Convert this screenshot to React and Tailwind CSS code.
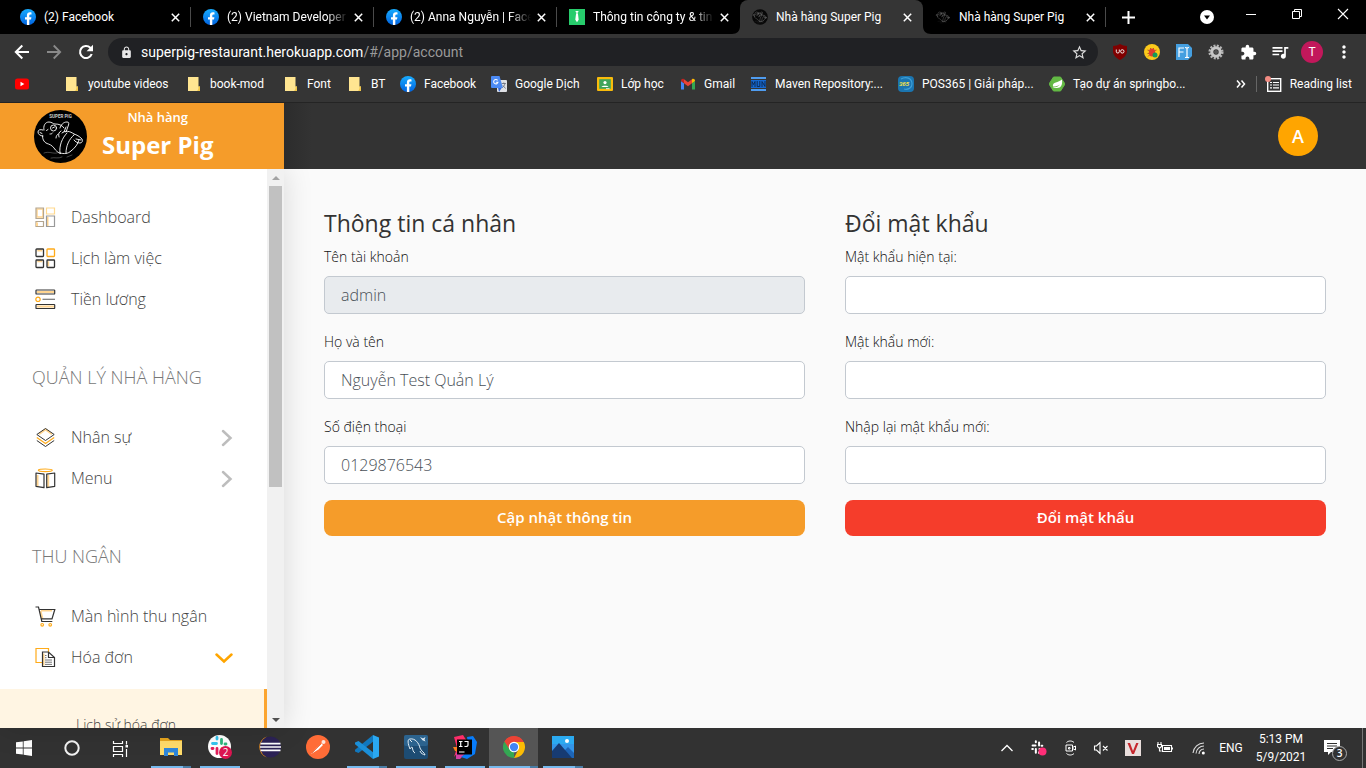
import React from "react";
import { MdExtension, MdQueueMusic, MdStarBorder, MdLock, MdMoreVert } from "react-icons/md";

const Svg = ({ s = 16, v = "0 0 16 16", children, className = "" }) => (
  <svg width={s} height={s} viewBox={v} fill="none" className={"shrink-0 " + className} aria-hidden="true">{children}</svg>
);

/* ---------- brand icons ---------- */
const Facebook = () => (
  <Svg>
    <defs><linearGradient id="fb" x1="0" y1="0" x2="0" y2="1"><stop stopColor="#18acfe" /><stop offset="1" stopColor="#0163e0" /></linearGradient></defs>
    <circle cx="8" cy="8" r="8" fill="url(#fb)" />
    <path d="M6.900 16v-5.400H5V8.200h1.900V6.400c0-2 1.200-3.200 3-3.200.6 0 1.300.1 1.600.2v2h-1c-1 0-1.200.6-1.200 1.300v1.500h2.100l-.4 2.400H9.300V16z" fill="#fff" />
  </Svg>
);
const Tie = () => (
  <Svg><rect width="16" height="16" fill="#27cc6c" /><path d="M6.400 2h3.200l-.7 1.800H7.100zM7.100 4.200h1.800l.8 6.600L8 13.200l-1.700-2.400z" fill="#fff" /></Svg>
);
const PigLines = () => (
  <g stroke="#fff" strokeWidth=".9" fill="none" strokeLinecap="round" strokeLinejoin="round">
    <path d="M10 20c-1-4 1-8 5-8 3 0 4 2 6 2 4 0 7 1 9 4M9 20c-3-1-5 0-5 2s2 4 5 4M8.500 26c0 4 2 7 6 8 3 1 5 3 7 6 2 2 3 3 5 3.500M26 18c1-3 3-6 7-6 2 0 2 1 1.500 3L32 22M30 22l2-5M28 23c3-3 8-2 12 1M25 27c-1-3 0-5 2-6M22 28c0-2 1-3 2-4M26 43c-1-7 2-15 7-20M32 43c0-7 3-14 8-18M37 41c4-3 7-7 8-11M40 24c3 1 5 2 8 5 1 2 0 4-2 4s-5-1-6-3M42 29l5 1M26 43c4 1 8 1 11-2" />
    <circle cx="19.500" cy="18" r="3" /><path d="M18.500 18l2-1M12.500 20.500l1.500-1M16 24c1 0 2 0 2.500-1M6 22.500l2 1" />
    <path d="M10 43c5-2 9 1 13 0M17 48c4-1 7 1 11-1M33 47l5-2" opacity=".3" />
  </g>
);
const PigMark = ({ ring }) => (
  <Svg v="0 0 53 53"><circle cx="26.500" cy="26.500" r="26" fill={ring ? "#080808" : "#000"} /><g opacity=".7" transform="translate(0 -2)"><PigLines /></g></Svg>
);
const Folder = () => (
  <Svg><path d="M2 1h10.500v9.500h1.500V15H2z" fill="#ffe591" /><path d="M12.500 10.500c0 2 0 3-1.500 4.500h3v-4.500z" fill="#f0c64a" /></Svg>
);
const YouTube = () => (
  <Svg><rect x="1" y="2.500" width="14" height="11" rx="2.500" fill="#f00" /><path d="M6.500 5.800v4.400L10.300 8z" fill="#fff" /></Svg>
);
const Translate = () => (
  <Svg>
    <rect x="6" y="4" width="10" height="12" rx="1" fill="#dfe1e5" /><path d="M8 16l3-4.500H7z" fill="#3367d6" />
    <path d="M1 0h7.500l3.500 12H1a1 1 0 01-1-1V1a1 1 0 011-1z" fill="#4c8bf5" />
    <path d="M6.600 4.300a2.200 2.200 0 10.400 1.900H4.800" stroke="#fff" strokeWidth="1.100" />
    <path d="M10.800 7.500h4M12.800 6.500v1M14 7.500c-.5 2-1.500 3-2.500 4M12 9.500l2.500 3" stroke="#6b7280" strokeWidth=".9" />
  </Svg>
);
const Classroom = () => (
  <Svg><rect y="1" width="16" height="14" rx="1" fill="#f9bb0b" /><rect x="2.200" y="3.200" width="11.600" height="9.600" fill="#3fa45b" /><circle cx="8" cy="6.600" r="1.600" fill="#fff" /><path d="M4.500 11c.4-1.800 6.600-1.800 7 0z" fill="#fff" /><path d="M9 13.200h3.500v-1H9z" fill="#eee" /></Svg>
);
const Gmail = () => (
  <Svg><path d="M1 13.500h3V7.200L1 5z" fill="#4285f4" /><path d="M12 13.500h3V5l-3 2.200z" fill="#34a853" /><path d="M4 3.300l4 3 4-3v3.900l-4 3-4-3z" fill="#ea4335" /><path d="M1 5c0-2 1.800-2.800 3-1.700v3.900z" fill="#c5221f" /><path d="M15 5c0-2-1.800-2.800-3-1.700v3.900z" fill="#fbbc04" /></Svg>
);
const Maven = () => (
  <Svg><rect y="1" width="15" height="2" fill="#4f9cf0" /><rect y="4" width="15" height="8" fill="#1668cf" /><rect y="13" width="15" height="2" fill="#4f9cf0" /><path d="M1 11V5.500l1.500 3 1.500-3V11M6.200 5v5.500h2.600V5M11 11V5.500l3 5V5" stroke="#0c2b57" strokeWidth="1" /></Svg>
);
const Pos = () => (
  <Svg><rect width="16" height="16" rx="4" fill="#1b75b0" /><path d="M3 3c5-3 11-1 11 5 0 4-4 6-8 5" stroke="#3e9fd6" strokeWidth="1.200" /><text x="1" y="10" fontSize="6" fontWeight="700" fontStyle="italic" fontFamily="Liberation Sans, sans-serif" fill="#f5e04a">365</text></Svg>
);
const Spring = () => (
  <Svg><path d="M4.500 1h7L16 8l-4.500 7h-7L0 8z" fill="#63b944" stroke="#63b944" strokeLinejoin="round" /><path d="M13 3.500c.7 5-1 8.500-5 8.500-2 0-3.500 0-4.500-.500 4 0 6-1 7.500-3-2 1.500-4 2-7 2C3 5.500 9.500 7 13 3.500z" fill="#fff" /></Svg>
);
const Cross = () => (
  <Svg s={9} v="0 0 9 9"><path d="M.8.8l7.400 7.400M8.200.8L.8 8.200" stroke="#fff" strokeWidth="1.500" /></Svg>
);

/* ---------- browser ---------- */
const tabs = [
  ["(2) Facebook", <Facebook />],
  ["(2) Vietnam Developer", <Facebook />],
  ["(2) Anna Nguyễn | Face", <Facebook />],
  ["Thông tin công ty & tin", <Tie />],
  ["Nhà hàng Super Pig", <PigMark ring />],
  ["Nhà hàng Super Pig", <PigMark />],
];
const fades = "[mask-image:linear-gradient(to_right,#000_82%,transparent)]";
const TabStrip = () => (
  <div className="flex h-[34px] shrink-0 items-stretch bg-black pl-2">
    {tabs.map(([label, icon], i) => (
      <div key={i} className={"relative flex w-[183px] min-w-0 items-center pl-3 " + (i === 4 ? "rounded-t-lg bg-[#353535]" : "")}>
        {i === 4 && <Svg s={8} v="0 0 8 8" className="absolute bottom-0 -left-2"><path d="M8 0v8H0c5 0 8-3 8-8z" fill="#353535" /></Svg>}
        {i === 4 && <Svg s={8} v="0 0 8 8" className="absolute bottom-0 -right-2"><path d="M0 0v8h8C3 8 0 5 0 0z" fill="#353535" /></Svg>}
        {icon}
        <button className={"ml-2 min-w-0 flex-1 overflow-hidden whitespace-nowrap text-left " + (i > 0 && i < 4 ? fades : "")}>{label}</button>
        <button aria-label="Close tab" className="ml-1.5"><Cross /></button>
        <span className={"ml-2.5 h-5 w-px " + (i === 3 || i === 4 ? "bg-transparent" : "bg-[#4a4a4a]")} />
      </div>
    ))}
    <button aria-label="New tab" className="ml-4 self-center"><Svg s={13} v="0 0 13 13"><path d="M6.500 0v13M0 6.500h13" stroke="#fff" strokeWidth="2" /></Svg></button>
    <div className="ml-auto flex items-center pr-[17px]">
      <button aria-label="Search tabs" className="mr-[30px]"><Svg s={16}><circle cx="8" cy="8" r="7" fill="#fff" /><path d="M5 6.500h6L8 10.500z" fill="#000" /></Svg></button>
      <button aria-label="Minimize" className="mr-[34px]"><Svg s={12} v="0 0 12 12"><path d="M1 3.500h10" stroke="#fff" /></Svg></button>
      <button aria-label="Restore" className="mr-[34px] mb-1.5"><Svg s={12} v="0 0 12 12"><path d="M1.500 3.500h7v7h-7zM3.500 3.500v-2h7v7h-2" stroke="#fff" /></Svg></button>
      <button aria-label="Close" className="mb-1.5"><Svg s={12} v="0 0 12 12"><path d="M1 1l10 10M11 1L1 11" stroke="#fff" strokeWidth="1.100" /></Svg></button>
    </div>
  </div>
);

const Ext = ({ label, children }) => <button aria-label={label} className="flex w-8 shrink-0 items-center justify-center">{children}</button>;

const Toolbar = () => (
  <div className="flex h-9 shrink-0 items-center bg-[#353535] pl-1.5 pr-1.5">
    <Ext label="Back"><Svg><path d="M15 8H2M8.300 1.500L1.800 8l6.500 6.500" stroke="#fff" strokeWidth="2" /></Svg></Ext>
    <Ext label="Forward"><Svg><path d="M1 8h13M7.700 1.500L14.200 8l-6.500 6.500" stroke="#8a8a8a" strokeWidth="1.800" /></Svg></Ext>
    <Ext label="Reload"><Svg><path d="M13.700 10A6 6 0 1112.300 3.800L14 5.500" stroke="#fff" strokeWidth="2.100" /><path d="M15 .8v6.400H8.600z" fill="#fff" /></Svg></Ext>
    <div className="ml-1.5 mr-1.5 flex h-7 min-w-0 flex-1 items-center rounded-full bg-[#202124] pl-3 pr-2.5">
      <MdLock size={13} color="#e8e8e8" className="shrink-0" />
      <div className="ml-2 flex-1 truncate text-sm">superpig-restaurant.herokuapp.com<span className="text-[#9a9a9a]">/#/app/account</span></div>
      <button aria-label="Bookmark this page"><MdStarBorder size={17} color="#ddd" /></button>
    </div>
    <Ext label="uBlock"><Svg><path d="M8 0c2 1.300 4.500 2 7 2v5c0 4-3 7-7 9-4-2-7-5-7-9V2c2.500 0 5-.7 7-2z" fill="#800000" /><path d="M4.300 5.500v2.300c0 1.700 3 1.700 3 0V5.500M12 7.400a1.700 1.700 0 11-3.400 0 1.700 1.700 0 013.400 0z" stroke="#fff" strokeWidth=".9" /></Svg></Ext>
    <Ext label="Bug reporter"><Svg><circle cx="8" cy="8" r="8" fill="#fbc91b" /><ellipse cx="8" cy="8.500" rx="3.200" ry="4" fill="#df3d2f" /><path d="M3.500 6l2 .7M3.500 9.500H5M12.500 6l-2 .7M6 4l1 1M10 4L9 5M4 12.500L5.500 11" stroke="#b0502a" strokeWidth=".9" /><circle cx="11" cy="11" r="2.500" fill="#139a59" /></Svg></Ext>
    <Ext label="Font finder"><Svg><path d="M0 0h12l4 4v8l-4 4H0z" fill="#459fe0" /><path d="M3 13V4h5M3 8h4.500M9 3.500c1 0 1.500.2 2 .7.500-.5 1-.7 2-.7M11 4.200v8.600M9 13.500c1 0 1.500-.2 2-.7.500.5 1 .7 2 .7" stroke="#fff" strokeWidth="1.200" /></Svg></Ext>
    <Ext label="Settings"><Svg><circle cx="8" cy="8" r="6.300" stroke="#b5b5b5" strokeWidth="2.500" strokeDasharray="2 1.300" /><circle cx="8" cy="8" r="4.200" stroke="#c6c6c6" strokeWidth="3" /><circle cx="8" cy="8" r="2" fill="#555" /></Svg></Ext>
    <Ext label="Extensions"><MdExtension size={17} /></Ext>
    <Ext label="Media"><MdQueueMusic size={20} /></Ext>
    <Ext label="Profile"><span className="flex size-[22px] items-center justify-center rounded-full bg-[#c2185b] text-xs">T</span></Ext>
    <Ext label="Menu"><MdMoreVert size={20} /></Ext>
  </div>
);

const marks = [
  [<Folder />, "youtube videos", "w-[122px]"], [<Folder />, "book-mod", "w-[97px]"], [<Folder />, "Font", "w-16"], [<Folder />, "BT", "w-[53px]"],
  [<Facebook />, "Facebook", "w-[91px]"], [<Translate />, "Google Dịch", "w-[106px]"], [<Classroom />, "Lớp học", "w-[83px]"], [<Gmail />, "Gmail", "w-[71px]"],
  [<Maven />, "Maven Repository:...", "w-[147px]"], [<Pos />, "POS365 | Giải pháp...", "w-[151px]"], [<Spring />, "Tạo dự án springbo...", "w-[150px]"],
];
const Bookmarks = () => (
  <div className="flex h-[33px] shrink-0 items-center border-b border-[#242424] bg-[#353535] px-3.5 pb-1">
    <a href="#youtube" aria-label="YouTube" className="w-[50px] shrink-0"><YouTube /></a>
    {marks.map(([icon, label, w], i) => (
      <a key={i} href="#bookmark" className={"flex shrink-0 items-center gap-2 whitespace-nowrap " + w}>
        {icon}{label}
      </a>
    ))}
    <button aria-label="More bookmarks" className="ml-auto mr-2.5"><Svg s={10} v="0 0 10 10"><path d="M1 1.500L4 5 1 8.500M5.500 1.500l3 3.500-3 3.500" stroke="#fff" strokeWidth="1.500" /></Svg></button>
    <span className="mr-2 h-4 w-px bg-[#666]" />
    <button className="flex shrink-0 items-center gap-2 whitespace-nowrap">
      <Svg s={17} v="0 0 17 17"><rect x="2.700" y="2.700" width="13" height="12.600" stroke="#fff" strokeWidth="1.400" /><path d="M5 6.500h2M8 6.500h6M5 9h2M8 9h6M5 11.800h2M8 11.800h6" stroke="#fff" strokeWidth="1.200" /><circle cx="3" cy="3" r="3" fill="#f28b82" /></Svg>
      Reading list
    </button>
  </div>
);

/* ---------- sidebar ---------- */
const A = "#ffab1a", K = "#333", L = "#ffd591";
const ic = {
  dash: <g strokeWidth="1.200"><path d="M2 2h6v8H2z" stroke={L} strokeWidth="1.500" /><path d="M1 1h7.500v10.500H1z" stroke="#b3a58f" /><path d="M11.500 1h8v6h-8z" stroke="#ffd98f" /><path d="M1 14.500h7.500v5H1z" stroke="#b3a58f" /><path d="M12.500 10v9" stroke={L} strokeWidth="2" /><path d="M11.500 9h8v10.500h-8z" stroke="#999" /><path d="M2 15.500v3.500" stroke={L} strokeWidth="2" /></g>,
  grid: <g strokeWidth="1.300"><path d="M2.300 2.500h5M2.300 13.300h5M13.200 13.300v5" stroke={L} strokeWidth="2" /><rect x="1" y="1" width="7.500" height="7.500" rx=".7" stroke={K} /><rect x="12" y="1" width="7.500" height="7.500" rx=".7" stroke={A} /><rect x="1" y="12" width="7.500" height="7.500" rx=".7" stroke={K} /><rect x="12" y="12" width="7.500" height="7.500" rx=".7" stroke={K} /></g>,
  list: <g strokeWidth="1.200"><path d="M2 3h17M2 17.500h17" stroke={L} strokeWidth="2" /><rect x="1" y="1" width="18.700" height="4" rx=".6" stroke={K} /><circle cx="3" cy="10.300" r="2.200" stroke={A} /><path d="M7.500 10.300H20" stroke="#777" /><rect x="1" y="15.500" width="18.700" height="4" rx=".6" stroke={K} /></g>,
  layers: <g strokeWidth="1"><path d="M4 7.200l6.500-4.700L17 7.200" stroke={L} strokeWidth="2" /><path d="M1.800 7.500L10.500 1.500l8.700 6-8.700 6z" stroke={K} /><path d="M1.800 10.500l8.700 6 8.700-6" stroke={A} strokeWidth="1.200" /><path d="M1.800 13.500l8.700 6 8.700-6" stroke={K} /></g>,
  book: <g strokeWidth="1.200"><path d="M2.500 7v11M13.200 7v12" stroke={L} strokeWidth="2" /><ellipse cx="10.300" cy="2.300" rx="7" ry="1.300" stroke={A} /><path d="M1 5l8 1.200v13.500L1 18.300zM19.700 5l-8 1.200v13.500l8-1.400z" stroke={K} strokeLinejoin="round" /></g>,
  cart: <g strokeWidth="1.200"><path d="M5.500 5l2 8M17 4.500H6" stroke={L} strokeWidth="2" /><path d="M.5 1h3l3.300 14.500h10.500M4 3.500h15.800L17 12.800H6.500" stroke={K} /><circle cx="7.200" cy="18.800" r="1.300" stroke={A} /><circle cx="15.200" cy="18.800" r="1.300" stroke={A} /></g>,
  bill: <g strokeWidth="1.200"><path d="M7 15.500H1V1.500h12.500v4" stroke={A} /><path d="M8.500 6.500v12" stroke={L} strokeWidth="2" /><path d="M7.500 5h6l6 5.500v9h-12zM13.500 5v5.500h6" stroke={K} /><path d="M10 13h7M10 15.200h7M10 17.400h7M10 8.500h1.500M10 10.700h1.500" stroke="#666" strokeWidth=".9" /></g>,
};
const Item = ({ icon, label, chevron }) => (
  <a href="#menu" className="flex h-[41px] items-center pl-[35px] pr-8">
    <Svg s={21} v="0 0 21 21" className="mt-0.5">{ic[icon]}</Svg>
    <span className="ml-[15px] flex-1">{label}</span>
    {chevron === "right" && <Svg s={18} v="0 0 18 18" className="mt-0.5"><path d="M6 2l7.500 7-7.500 7" stroke="#bdbdbd" strokeWidth="2.500" strokeLinecap="round" /></Svg>}
    {chevron === "down" && <Svg s={18} v="0 0 18 18" className="mr-0.5 mt-0.5"><path d="M1.500 5.500L9 12.500l7.500-7" stroke="#ffa500" strokeWidth="2.500" strokeLinecap="round" /></Svg>}
  </a>
);
const Section = ({ children }) => <h2 className="pt-[45px] pb-[25px] pl-8 text-lg leading-[27px] text-[#777]">{children}</h2>;

const Sidebar = () => (
  <aside className="z-10 flex w-[284px] shrink-0 shadow-[0_0_28px_rgba(0,0,0,0.14)]">
    <nav className="min-w-0 flex-1 overflow-hidden bg-white pt-[27px] text-base font-light text-[#444]">
      <Item icon="dash" label="Dashboard" />
      <Item icon="grid" label="Lịch làm việc" />
      <Item icon="list" label="Tiền lương" />
      <Section>QUẢN LÝ NHÀ HÀNG</Section>
      <Item icon="layers" label="Nhân sự" chevron="right" />
      <Item icon="book" label="Menu" chevron="right" />
      <Section>THU NGÂN</Section>
      <Item icon="cart" label="Màn hình thu ngân" />
      <Item icon="bill" label="Hóa đơn" chevron="down" />
      <div className="mt-3 border-r-[3px] border-[#fca52f] bg-[#fff5e3] py-6 pl-[76px] text-sm leading-6">
        <a href="#history">Lịch sử hóa đơn</a>
      </div>
    </nav>
    <div className="flex w-[17px] flex-col items-center bg-[#f1f1f1]" aria-hidden="true">
      <div className="flex h-[17px] items-center"><Svg s={8} v="0 0 8 8"><path d="M0 6l4-4 4 4z" fill="#a3a3a3" /></Svg></div>
      <div className="flex w-full flex-1 flex-col px-0.5"><div className="h-[57.4%] bg-[#c1c1c1]" /></div>
      <div className="flex h-[17px] items-center"><Svg s={8} v="0 0 8 8"><path d="M0 2h8L4 6z" fill="#505050" /></Svg></div>
    </div>
  </aside>
);

/* ---------- page ---------- */
const Header = () => (
  <header className="relative z-20 flex h-[66px] shrink-0 bg-[#333]">
    <div className="flex w-[284px] shrink-0 items-center bg-[#f59c2a] pl-[34px] text-white">
      <Svg s={53} v="0 0 53 53"><circle cx="26.500" cy="26.500" r="26.500" fill="#000" /><text x="26.500" y="7.500" textAnchor="middle" fontSize="4.500" fontWeight="700" fontFamily="Roboto, sans-serif" fill="#ccc">SUPER PIG</text><PigLines /></Svg>
      <div className="ml-[15px] text-center">
        <div className="pt-0.5 text-[13px] font-semibold leading-5">Nhà hàng</div>
        <div className="pb-1 text-2xl font-bold leading-9">Super Pig</div>
      </div>
    </div>
    <div className="flex flex-1 items-center justify-end bg-[linear-gradient(to_right,#2c2c2c,#333_28px)] pr-12">
      <button className="size-10 rounded-full bg-[#ffa500] text-lg font-semibold text-white">A</button>
    </div>
  </header>
);

const Field = ({ id, label, value = "", type = "text", disabled }) => (
  <div className="mb-4">
    <label htmlFor={id} className="mb-2 block text-sm font-light leading-[23px] text-[#111]">{label}</label>
    <input id={id} type={type} defaultValue={value} disabled={disabled} className="block h-[38px] w-full rounded-[5px] border border-[#c3c9d0] bg-white px-4 text-base font-light text-[#495057] disabled:bg-[#e8ebee]" />
  </div>
);
const Form = ({ title, action, color, children }) => (
  <form className="min-w-0 flex-1" onSubmit={(e) => e.preventDefault()}>
    <h1 className="mb-2 text-[23px] leading-7 text-[#333]">{title}</h1>
    {children}
    <button className={"h-9 w-full rounded-lg pb-0.5 text-[15px] font-semibold text-white " + color}>{action}</button>
  </form>
);

/* ---------- taskbar ---------- */
const TaskApp = ({ label, children, active, run, stack }) => (
  <button aria-label={label} className={"flex h-10 w-[49px] shrink-0 flex-col items-center " + (active ? "bg-[#555]" : "")}>
    <span className="flex flex-1 items-center">{children}</span>
    <span className={"flex h-0.5 " + (active ? "w-full " : "w-10 ") + (run ? "bg-[#76b9ed]" : "")}>{stack && <span className="ml-auto w-2 bg-[#4a7da5]" />}</span>
  </button>
);
const Slack = ({ c }) => (
  <g strokeWidth="2.800" strokeLinecap="round">
    <path d="M5 9h4M9.500 3v1.500" stroke={c || "#36c5f0"} /><path d="M14 5v4M18.500 9.500h-1" stroke={c || "#2eb67d"} /><path d="M14.500 14h4M14 18.500v1" stroke={c || "#ecb22e"} /><path d="M9.500 14v5M4.500 14h1" stroke={c || "#e01e5a"} />
  </g>
);
const Taskbar = () => (
  <footer className="flex h-10 shrink-0 items-center bg-[#323232] text-white">
    <button aria-label="Start" className="flex w-12 justify-center"><Svg><path d="M0 2.300L6.800 1.400v6.200H0zM7.600 1.300L16 0v7.600H7.600zM0 8.400h6.800v6.200L0 13.700zM7.600 8.400H16V16l-8.400-1.300z" fill="#fff" /></Svg></button>
    <button aria-label="Cortana" className="flex w-12 justify-center"><Svg><circle cx="8" cy="8" r="6.700" stroke="#f2f2f2" strokeWidth="2" /></Svg></button>
    <button aria-label="Task view" className="flex w-[50px] justify-center pr-0.5"><Svg s={17} v="0 0 17 17"><path d="M1.500 1v2.500h9V1M1.500 6.500h9v5h-9zM1.500 17v-2.500h9V17M14.500 1v3.500M14.500 9v8" stroke="#fff" strokeWidth="1.200" /><path d="M13.500 5h2.500v2.500h-2.500z" fill="#fff" /></Svg></button>
    <TaskApp label="File Explorer" run stack><Svg s={22} v="0 0 22 22"><path d="M0 2h8l2 2h12v14H0z" fill="#e6a51e" /><path d="M0 5h22v14H0z" fill="#ffdc6b" /><path d="M4 20v-8h14v8h-4v-3.500H8V20z" fill="#2f87da" /></Svg></TaskApp>
    <TaskApp label="Slack" run><Svg s={24} v="0 0 24 24"><circle cx="11.500" cy="11.500" r="11.500" fill="#fff" /><g transform="translate(-.5 -.5)"><Slack /></g><circle cx="17.500" cy="17.500" r="6.500" fill="#dc1551" /><text x="17.500" y="21" textAnchor="middle" fontSize="10" fontFamily="Open Sans, sans-serif" fill="#fff">2</text></Svg></TaskApp>
    <TaskApp label="Eclipse"><Svg s={24} v="0 0 24 24"><path d="M10 1.500a11 11 0 000 21C5 19 4 16 4 12s1-7 6-10.500z" fill="#f7941e" /><circle cx="13.500" cy="12" r="10.500" fill="#2c2255" /><path d="M3.500 8.700h20M3 12h21M3.500 15.300h20" stroke="#fff" strokeWidth="1.700" /></Svg></TaskApp>
    <TaskApp label="Postman"><Svg s={24} v="0 0 24 24"><circle cx="12" cy="12" r="12" fill="#ff6c37" /><path d="M5 19l5.500-6 5-4.500 1.500 1.500-4.500 4.500z" fill="#fff" /><circle cx="17.500" cy="7" r="2" fill="#fbe6de" /><path d="M6 18l9-9" stroke="#e05320" strokeWidth=".7" /></Svg></TaskApp>
    <TaskApp label="Visual Studio Code" run stack><Svg s={24} v="0 0 24 24"><path d="M18 0l6 2.500v19L18 24z" fill="#2aa8f2" /><path d="M18 0v6.700L3.500 18 0 16.500v-1.800z" fill="#1177bd" /><path d="M18 24v-6.700L3.500 6 0 7.500v1.800z" fill="#1b8fd8" /></Svg></TaskApp>
    <TaskApp label="MySQL Workbench" run><Svg s={24} v="0 0 24 24"><rect width="24" height="24" rx="2" fill="#1d4c73" /><rect width="24" height="11" rx="2" fill="#2c638e" /><path d="M6 14c-2-5-3-10 0-10 5-1 9 4 10 9 1 3 5 5 5 7-2-1-4-1-5-4M6 14c1-1 1-2 2-2 1 3 1 5 3 6M6 5l2 2" stroke="#e4eef5" strokeWidth="1" /><path d="M16 2l3 1.500L21.500 2l-1 2.500 1 2-3-1.200z" fill="#e4eef5" /></Svg></TaskApp>
    <TaskApp label="IntelliJ IDEA" run><Svg s={24} v="0 0 24 24"><path d="M1 2l9-2 5 8-8 7-6 7 3-9z" fill="#fe2d69" /><path d="M0 12h6v5l-4-1z" fill="#fc801d" /><path d="M3 18h10l-6 6H3z" fill="#d33fa4" /><path d="M14 2l6-1 4 6-2 12-8 5-6-2 8-6z" fill="#087cfa" /><path d="M4 4.500h15v15H4z" fill="#000" /><path d="M6 6.500h3.500M7.700 6.500v5M6 11.500h3.500M11.500 6.500h3.500v3.500c0 1.300-1.500 1.800-3.500 1.300M6 17h5.500" stroke="#fff" strokeWidth="1.200" /></Svg></TaskApp>
    <TaskApp label="Google Chrome" run stack active><Svg s={22} v="0 0 24 24"><path d="M12 12L1.600 6A12 12 0 0122.400 6z" fill="#ea4335" /><path d="M12 12v12A12 12 0 011.600 6z" fill="#34a853" /><path d="M12 6.500h10.700A12 12 0 0112 24l4.800-9.300z" fill="#fbbc05" /><path d="M1.600 6A12 12 0 0122.400 6.500H12L7 14.500z" fill="#ea4335" /><circle cx="12" cy="12" r="5.700" fill="#fff" /><circle cx="12" cy="12" r="4.500" fill="#4285f4" /></Svg></TaskApp>
    <TaskApp label="Photos" run stack><Svg s={22} v="0 0 22 22"><path d="M0 0h22v22H0z" fill="#3395e8" /><path d="M0 0h22v8H0z" fill="#2baaf0" /><path d="M10 17l6-6 6 6v5H10z" fill="#1d65b7" /><path d="M0 15l7-8 13 15H0z" fill="#173b72" /><circle cx="15" cy="5" r="2" fill="#fff" /></Svg></TaskApp>
    <div className="ml-auto flex shrink-0 items-center font-['Roboto',sans-serif] text-xs">
      <button aria-label="Show hidden icons" className="flex w-8 justify-center"><Svg s={12} v="0 0 12 12"><path d="M.5 9L6 3.500 11.500 9" stroke="#fff" strokeWidth="1.300" /></Svg></button>
      <span className="flex w-8 justify-center"><Svg><g transform="translate(-2 -1) scale(.72)"><Slack c="#fff" /></g><circle cx="11.500" cy="11.500" r="4" fill="#ff2e78" /></Svg></span>
      <span className="flex w-8 justify-center"><Svg><path d="M3.500 2.500C5.500.5 9 .5 11 2.500M3.500 13.500c2 2 5.500 2 7.500 0M3 5h6.500v6H3zM9.500 7.500l3-1.500v4l-3-1.500M5.500 7.500H7v1.500H5.500z" stroke="#fff" /></Svg></span>
      <span className="flex w-8 justify-center pr-1"><Svg><path d="M1.500 6h2L7 2.500v11L3.500 10h-2zM10 6l4.500 4.500M14.500 6L10 10.500" stroke="#fff" strokeWidth="1.100" /></Svg></span>
      <span className="flex w-8 justify-center pr-1"><Svg><rect width="16" height="16" fill="#e9dedc" /><path d="M2.500 3l4.500 11h2L13.500 3h-2.300L8 11 5 3z" fill="#c5262c" /></Svg></span>
      <span className="flex w-8 justify-center pr-1"><Svg><path d="M5.500 5.500h9v6h-9zM15.500 7.500v2M1 2v2M4 2v2M.5 4.500h4v2L2.500 8.500l-2-2zM2.500 8v3h2" stroke="#fff" strokeWidth="1.100" /><path d="M7 7h6v3H7z" fill="#fff" /></Svg></span>
      <span className="flex w-9 justify-center pr-1"><Svg><path d="M2 13A11 11 0 0113 3M5 13.500a8 8 0 018-7.500M8 14a5 5 0 015-5" stroke="#ddd" strokeWidth="1.100" /><circle cx="12.300" cy="13" r="1.500" fill="#fff" /></Svg></span>
      <span className="w-6 text-center">ENG</span>
      <div className="w-[76px] text-center leading-[18px]"><div>5:13 PM</div><div>5/9/2021</div></div>
      <button aria-label="Notifications" className="ml-1 mr-3.5"><Svg s={25} v="0 0 25 25"><path d="M1 4h16v12H8l-3 3v-3H1z" fill="#fff" /><path d="M4 7.500h10M4 10h10M4 12.500h6" stroke="#323232" /><circle cx="16.500" cy="17.500" r="7" fill="#323232" stroke="#aaa" /><text x="16.500" y="21" textAnchor="middle" fontSize="10" fontWeight="600" fontFamily="Open Sans, sans-serif" fill="#fff">3</text></Svg></button>
      <span className="h-10 w-1 border-l border-[#777]" />
    </div>
  </footer>
);

export default function App() {
  return (
    <div className="flex h-screen min-h-[600px] flex-col overflow-hidden bg-[#fafafa] font-['Open_Sans',sans-serif]">
      <div className="font-['Roboto',sans-serif] text-xs text-white">
        <TabStrip />
        <Toolbar />
        <Bookmarks />
      </div>
      <Header />
      <div className="flex min-h-0 flex-1">
        <Sidebar />
        <main className="flex min-w-0 flex-1 gap-10 overflow-hidden p-10">
          <Form title="Thông tin cá nhân" action="Cập nhật thông tin" color="bg-[#f59c2a]">
            <Field id="account" label="Tên tài khoản" value="admin" disabled />
            <Field id="name" label="Họ và tên" value="Nguyễn Test Quản Lý" />
            <Field id="phone" label="Số điện thoại" value="0129876543" type="tel" />
          </Form>
          <Form title="Đổi mật khẩu" action="Đổi mật khẩu" color="bg-[#f53d2b]">
            <Field id="current" label="Mật khẩu hiện tại:" type="password" />
            <Field id="next" label="Mật khẩu mới:" type="password" />
            <Field id="confirm" label="Nhập lại mật khẩu mới:" type="password" />
          </Form>
        </main>
      </div>
      <Taskbar />
    </div>
  );
}
